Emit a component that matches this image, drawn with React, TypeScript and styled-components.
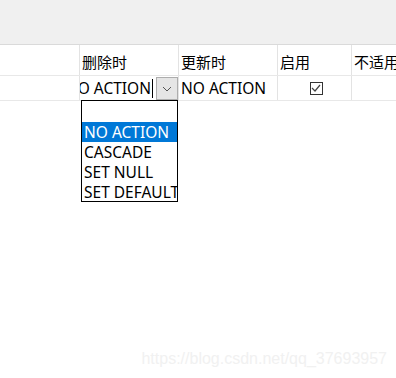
import React from "react";
import styled, { createGlobalStyle } from "styled-components";

const Global = createGlobalStyle`
  html, body { margin: 0; padding: 0; background: #ffffff; }
  body { font-family: "Noto Sans", "Noto Sans CJK SC", sans-serif; }
  * { box-sizing: border-box; }
`;

const Page = styled.div`
  width: 396px;
  height: 378px;
  position: relative;
  overflow: hidden;
  background: #ffffff;
`;

const TopBand = styled.div`
  height: 45px;
  background: #f0f0f0;
  border-bottom: 1px solid #dadada;
`;

const Row = styled.div<{ $h: number }>`
  display: grid;
  grid-template-columns: 80px 99px 99px 74px 1fr;
  height: ${(p) => p.$h}px;
  border-bottom: 1px solid #e8e8e8;
`;

const Cell = styled.div<{ $center?: boolean; $last?: boolean }>`
  position: relative;
  display: flex;
  align-items: center;
  justify-content: ${(p) => (p.$center ? "center" : "flex-start")};
  border-right: ${(p) => (p.$last ? "none" : "1px solid #e3e3e3")};
  padding-left: 2px;
  font-size: 15.5px;
  color: #000;
  white-space: nowrap;
  overflow: hidden;
`;

const HeaderCell = styled(Cell)`
  font-family: "Noto Sans CJK SC", sans-serif;
  font-size: 15px;
  padding-top: 2px;
`;

const EditCell = styled(Cell)`
  padding-left: 0;
  overflow: visible;
`;

const EditText = styled.div`
  width: 76px;
  height: 100%;
  overflow: hidden;
  display: flex;
  align-items: center;
  justify-content: flex-end;
  padding-right: 3px;
`;

const Caret = styled.span`
  flex: none;
  display: inline-block;
  width: 1px;
  height: 19px;
  background: #000;
  margin-left: 1px;
`;

const DropButton = styled.div`
  width: 22px;
  height: 23px;
  margin-top: 1px;
  background: #e5e5e5;
  border: 1px solid #adadad;
  display: flex;
  align-items: center;
  justify-content: center;
`;

const Check = styled.div`
  width: 13px;
  height: 13px;
  border: 1px solid #333;
  display: flex;
  align-items: center;
  justify-content: center;
  margin-left: 1px;
`;

const List = styled.div`
  position: absolute;
  left: 1px;
  top: 24px;
  width: 97px;
  height: 102px;
  background: #fff;
  border: 1px solid #000;
  padding-top: 21px;
  z-index: 2;
`;

const Item = styled.div<{ $sel?: boolean }>`
  height: 20px;
  line-height: 20px;
  padding-left: 2px;
  font-size: 15.5px;
  white-space: nowrap;
  overflow: hidden;
  background: ${(p) => (p.$sel ? "#0078d7" : "transparent")};
  color: ${(p) => (p.$sel ? "#fff" : "#000")};
`;

const Watermark = styled.div`
  position: absolute;
  right: 9px;
  bottom: 10px;
  font-family: "Liberation Sans", Arial, sans-serif;
  font-size: 16px;
  color: #f1f1f1;
`;

export default function App() {
  return (
    <Page>
      <Global />
      <TopBand />
      <Row $h={31}>
        <Cell />
        <HeaderCell>删除时</HeaderCell>
        <HeaderCell>更新时</HeaderCell>
        <HeaderCell>启用</HeaderCell>
        <HeaderCell $last>不适用</HeaderCell>
      </Row>
      <Row $h={25}>
        <Cell />
        <EditCell>
          <EditText>
            NO ACTION
            <Caret />
          </EditText>
          <DropButton>
            <svg width="10" height="6" viewBox="0 0 10 6">
              <path d="M1 1 L5 5 L9 1" fill="none" stroke="#555" strokeWidth="1" />
            </svg>
          </DropButton>
          <List>
            <Item $sel>NO ACTION</Item>
            <Item>CASCADE</Item>
            <Item>SET NULL</Item>
            <Item>SET DEFAULT</Item>
          </List>
        </EditCell>
        <Cell>NO ACTION</Cell>
        <Cell $center>
          <Check>
            <svg width="10" height="8" viewBox="0 0 10 8">
              <path d="M1 4 L4 7 L9 1" fill="none" stroke="#444" strokeWidth="1.2" />
            </svg>
          </Check>
        </Cell>
        <Cell $last />
      </Row>
      <Watermark>https://blog.csdn.net/qq_37693957</Watermark>
    </Page>
  );
}
